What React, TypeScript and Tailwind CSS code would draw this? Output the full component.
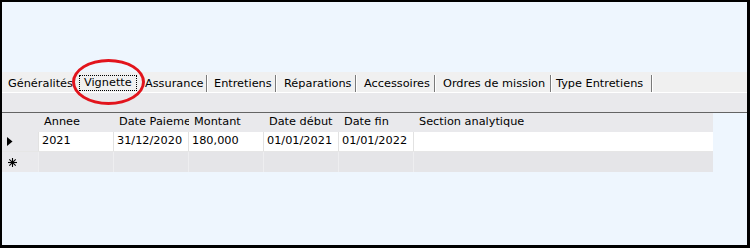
import { type ReactNode } from 'react'

const TABS = [
  { label: 'Généralités', w: 'w-[73px]', pl: 'pl-[6px]', sep: false },
  { label: 'Vignette', w: 'w-[66px]', pl: 'pl-[4px]', sep: true, selected: true },
  { label: 'Assurance', w: 'w-[67px]', pl: 'pl-[4px]', sep: true },
  { label: 'Entretiens', w: 'w-[69px]', pl: 'pl-[6px]', sep: true },
  { label: 'Réparations', w: 'w-[80px]', pl: 'pl-[7px]', sep: true },
  { label: 'Accessoires', w: 'w-[79px]', pl: 'pl-[7px]', sep: true },
  { label: 'Ordres de mission', w: 'w-[116px]', pl: 'pl-[7px]', sep: true },
  { label: 'Type Entretiens', w: 'w-[101px]', pl: 'pl-[4px]', sep: true },
]

const COLS = ['Annee', 'Date Paieme', 'Montant', 'Date début', 'Date fin', 'Section analytique']
const ROW = ['2021', '31/12/2020', '180,000', '01/01/2021', '01/01/2022', '']
const WIDTHS = ['w-[75px]', 'w-[75px]', 'w-[75px]', 'w-[75px]', 'w-[75px]', 'w-[299px]']

function Cell({ w, className, children }: { w: string; className: string; children?: ReactNode }) {
  return (
    <div className={`${w} shrink-0 overflow-hidden whitespace-nowrap flex items-center ${className}`}>
      {children}
    </div>
  )
}

export default function App() {
  return (
    <div className="relative w-[750px] h-[248px] border-l-2 border-t-2 border-r-[3px] border-b-[3px] border-black bg-[#eef6fe] flex flex-col font-['DejaVu_Sans',sans-serif] text-[11.3px] text-black">
      <div className="h-[70px] shrink-0" />

      {/* tab strip */}
      <div className="h-[20px] shrink-0 bg-[#f0f0f0] flex items-stretch">
        {TABS.map((t) => (
          <div key={t.label} className={`${t.w} shrink-0 flex items-stretch`}>
            <div className={`flex-1 flex items-center ${t.pl} ${t.selected ? 'pt-[2px]' : 'pt-[5px]'}`}>
              {t.selected ? (
                <span className="border border-dotted border-black px-[4px] leading-[13px] h-[16px]">{t.label}</span>
              ) : (
                <span className="whitespace-nowrap">{t.label}</span>
              )}
            </div>
            {t.sep && !t.selected && (
              <div className="mt-[3px] w-[2px] flex">
                <div className="w-px bg-[#7a7a7a]" />
                <div className="w-px bg-white" />
              </div>
            )}
          </div>
        ))}
      </div>
      <div className="h-px shrink-0 bg-white" />
      <div className="h-[19px] shrink-0 bg-[#e9e9ec]" />
      <div className="h-px shrink-0 bg-[#646464]" />

      {/* grid */}
      <div className="w-[711px] flex flex-col">
        <div className="h-[19px] flex bg-[#e9e9ec]">
          <Cell w="w-[37px]" className="" />
          {COLS.map((c, i) => (
            <Cell key={c} w={WIDTHS[i]} className="pl-[5px]">
              {c}
            </Cell>
          ))}
        </div>
        <div className="h-[20px] flex border-b border-[#e6e6e6]">
          <Cell w="w-[37px]" className="bg-[#e9e9ec] pl-[5px] border-r border-[#e2e2e2]">
            <svg width="6" height="9" viewBox="0 0 6 9">
              <polygon points="0,0 5.5,4.5 0,9" fill="#000" />
            </svg>
          </Cell>
          {ROW.map((v, i) => (
            <Cell key={i} w={WIDTHS[i]} className={`bg-white pl-[3px] ${i < 5 ? 'border-r border-[#e2e2e2]' : ''}`}>
              {v}
            </Cell>
          ))}
        </div>
        <div className="h-[20px] flex">
          <Cell w="w-[37px]" className="bg-[#e9e9ec] pl-[6px] border-r border-[#eeeef0]">
            <svg width="9" height="9" viewBox="0 0 9 9" stroke="#000" strokeWidth="1.1">
              <line x1="4.5" y1="0" x2="4.5" y2="9" />
              <line x1="0" y1="4.5" x2="9" y2="4.5" />
              <line x1="1.3" y1="1.3" x2="7.7" y2="7.7" />
              <line x1="7.7" y1="1.3" x2="1.3" y2="7.7" />
            </svg>
          </Cell>
          {WIDTHS.map((w, i) => (
            <Cell key={i} w={w} className={`bg-[#e5e5e8] ${i < 5 ? 'border-r border-[#eeeef0]' : ''}`} />
          ))}
        </div>
      </div>

      {/* red annotation ellipse */}
      <div className="absolute left-[70px] top-[57px] w-[73px] h-[46px] rounded-[50%] border-[3px] border-[#e2141c]" />
    </div>
  )
}
